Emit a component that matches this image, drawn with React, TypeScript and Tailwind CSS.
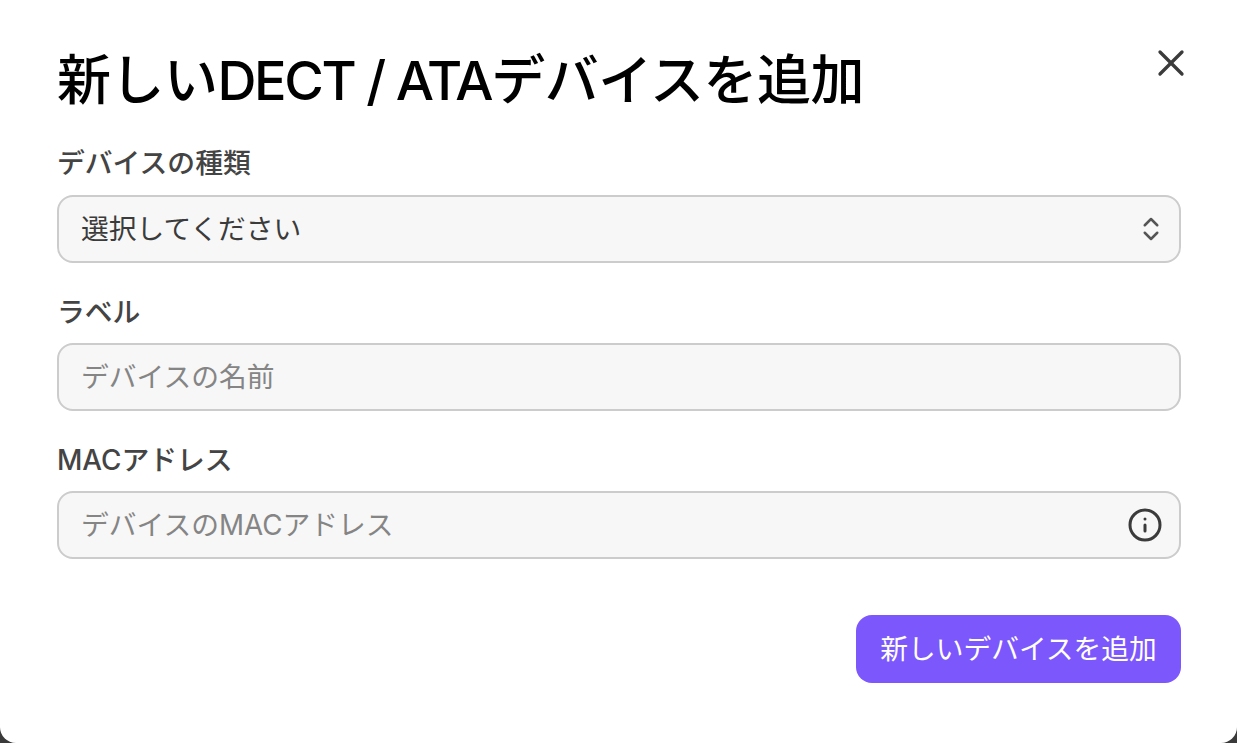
import { ChevronsUpDown, Info, X } from "lucide-react";

function Label({ children }: { children: React.ReactNode }) {
  return <label className="block h-[36px] text-[27.8px] font-medium leading-[36px] text-[#444444]">{children}</label>;
}

export default function App() {
  return (
    <div className="h-[743px] w-full overflow-hidden bg-[#3a3a3a] font-['Inter','Noto_Sans_CJK_JP',sans-serif]">
      <div className="flex h-[743px] flex-col rounded-b-[16px] bg-white pl-[57px] pr-[56px]">
        <div className="flex h-[145px] items-start justify-between">
          <h1 className="mt-[48px] text-[54px] font-medium leading-[66px] tracking-[-0.5px] text-black">
            新しい<span className="tracking-[-2.4px]">DECT / ATA</span>デバイスを追加
          </h1>
          <button className="mt-[41px] mr-[-12px] text-[#3b3b3b]"><X size={44} strokeWidth={1.8} /></button>
        </div>
        <Label>デバイスの種類</Label>
        <div className="mt-[14px] flex h-[68px] items-center justify-between rounded-[16px] border-2 border-[#cccccc] bg-[#f7f7f7] pl-[22px] pr-[13px] text-[27.75px] text-[#3b3b3b]">
          <span className="relative top-[1px]">選択してください</span>
          <ChevronsUpDown size={30} strokeWidth={2} className="text-[#555555]" />
        </div>
        <div className="mt-[31px]"><Label>ラベル</Label></div>
        <div className="mt-[13px] flex h-[68px] items-center rounded-[16px] border-2 border-[#cccccc] bg-[#f7f7f7] pl-[22px] pr-[16px]">
          <input readOnly placeholder="デバイスの名前" className="w-full bg-transparent pt-[2px] text-[27.75px] outline-none placeholder:text-[#858585]" />
        </div>
        <div className="mt-[31px]"><Label>MACアドレス</Label></div>
        <div className="mt-[13px] flex h-[68px] items-center rounded-[16px] border-2 border-[#cccccc] bg-[#f7f7f7] pl-[22px] pr-[16px]">
          <input readOnly placeholder="デバイスのMACアドレス" className="w-full bg-transparent pt-[2px] text-[27.75px] outline-none placeholder:text-[#858585]" />
          <Info size={36} strokeWidth={2} className="shrink-0 text-[#3b3b3b]" />
        </div>
        <div className="mt-[56px] flex justify-end">
          <button className="h-[68px] w-[325px] rounded-[16px] bg-[#7c57fc] pt-[2px] text-[27.75px] text-white">新しいデバイスを追加</button>
        </div>
      </div>
    </div>
  );
}
